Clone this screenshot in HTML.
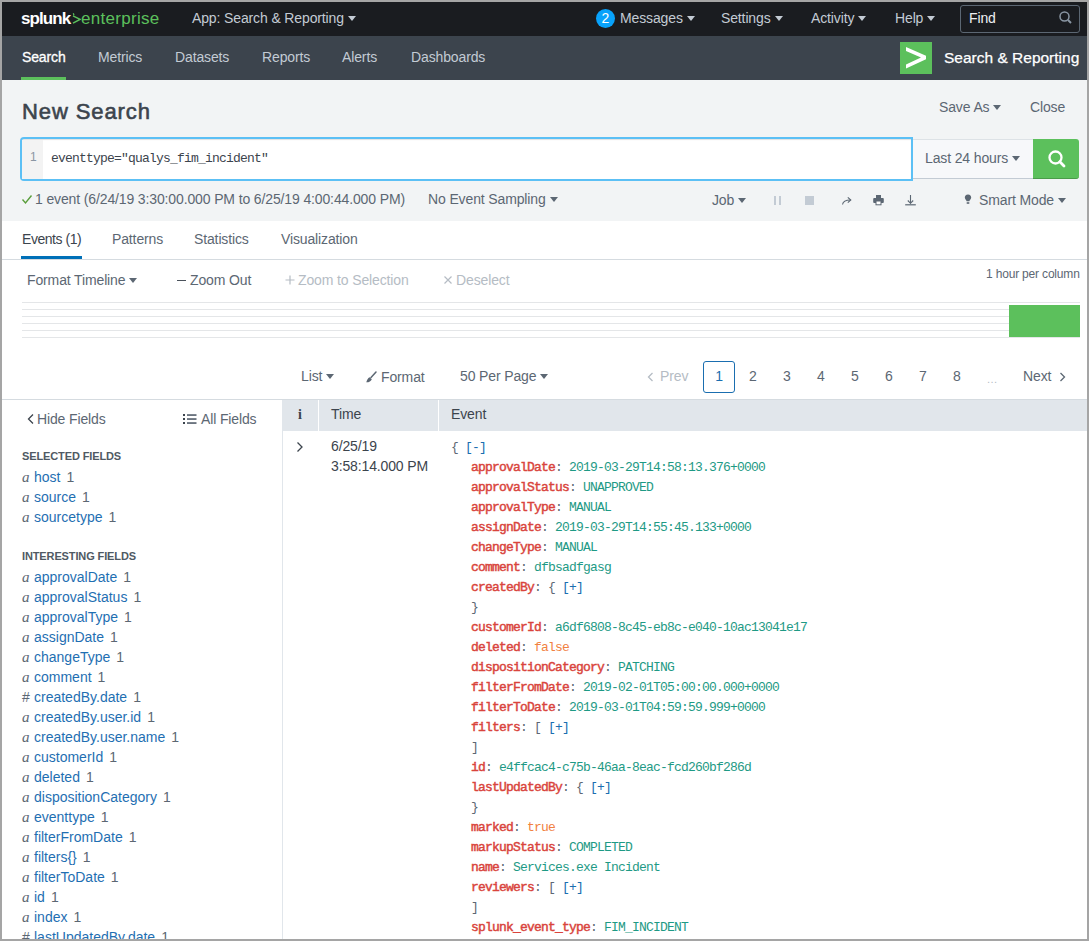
<!DOCTYPE html>
<html><head><meta charset="utf-8">
<style>
*{box-sizing:border-box;margin:0;padding:0}
html,body{width:1089px;height:941px;overflow:hidden;background:#fff;font-family:"Liberation Sans",sans-serif;position:relative}
.a{position:absolute;white-space:nowrap}
.bd{position:absolute;background:#a5a5a5;z-index:50}
#top{position:absolute;left:0;top:0;width:1089px;height:36px;background:#1a1c20}
#nav{position:absolute;left:0;top:36px;width:1089px;height:44px;background:#3c444d}
#hdr{position:absolute;left:0;top:80px;width:1089px;height:141px;background:#f2f4f5}
.tw{color:#c3cbd4;font-size:14px;line-height:16px;letter-spacing:-0.13px}
.car{display:inline-block;width:0;height:0;border-left:4px solid transparent;border-right:4px solid transparent;border-top:5px solid currentColor;vertical-align:middle;margin-left:4px;position:relative;top:-1px}
.nv{color:#c3cbd4;font-size:14px;line-height:16px;letter-spacing:-0.13px}
.t{color:#5c6773;font-size:14px;line-height:16px;letter-spacing:-0.13px}
.fl{font-size:14px;line-height:16px;color:#5c6773}
.fl i{font-family:"Liberation Serif",serif;font-style:italic;font-size:15px;color:#5c6773;display:inline-block;width:12px}
.fl b{font-weight:normal;color:#1f6fb2;margin-right:6px}
.mono{font-family:"Liberation Mono",monospace;font-size:13px;letter-spacing:-0.8px;line-height:20px;color:#3c444d;white-space:nowrap}
.k{color:#d9443c;font-weight:normal;-webkit-text-stroke:0.45px #d9443c}
.v{color:#1e9a85}
.o{color:#f1813f}
.br{color:#1a6eb0}
.t.d{color:#3c444d}
</style></head><body>
<div id="top"></div>
<div id="nav"></div>
<div id="hdr"></div>

<!-- logo -->
<div class="a" style="left:21px;top:9px;font-size:17px;line-height:20px;letter-spacing:-0.9px;color:#fff;font-weight:bold">splunk</div>
<svg class="a" style="left:71px;top:13px" width="10" height="12" viewBox="0 0 10 12"><polyline points="2,2.9 9,6.4 2,10.1" fill="none" stroke="#5cc05c" stroke-width="1.5"/><line x1="2.3" y1="0.3" x2="3" y2="2.3" stroke="#5cc05c" stroke-width="1.2"/></svg>
<div class="a" style="left:81px;top:9px;font-size:17px;line-height:20px;letter-spacing:0.3px;color:#5cc05c">enterprise</div>
<div class="a tw" style="left:192px;top:10px">App: Search &amp; Reporting<span class="car"></span></div>
<div class="a" style="left:596px;top:9px;width:19px;height:19px;border-radius:50%;background:#08a2fb;color:#fff;font-size:14px;line-height:19px;text-align:center">2</div>
<div class="a tw" style="left:620px;top:10px">Messages<span class="car"></span></div>
<div class="a tw" style="left:721px;top:10px">Settings<span class="car"></span></div>
<div class="a tw" style="left:811px;top:10px">Activity<span class="car"></span></div>
<div class="a tw" style="left:895px;top:10px">Help<span class="car"></span></div>
<div class="a" style="left:960px;top:5px;width:120px;height:28px;border:1px solid #5c6773;border-radius:3px"></div>
<div class="a tw" style="left:969px;top:10px;color:#eef0f2">Find</div>
<svg class="a" style="left:1058px;top:10px" width="16" height="16" viewBox="0 0 16 16"><circle cx="6.5" cy="6.5" r="4.5" fill="none" stroke="#8a96a3" stroke-width="1.5"/><line x1="10" y1="10" x2="13" y2="13" stroke="#8a96a3" stroke-width="2"/></svg>

<!-- nav -->
<div class="a nv" style="left:22px;top:49px;color:#fff;-webkit-text-stroke:0.3px #fff">Search</div>
<div class="a" style="left:21px;top:77px;width:45px;height:3px;background:#5cc05c"></div>
<div class="a nv" style="left:98px;top:49px">Metrics</div>
<div class="a nv" style="left:175px;top:49px">Datasets</div>
<div class="a nv" style="left:262px;top:49px">Reports</div>
<div class="a nv" style="left:342px;top:49px">Alerts</div>
<div class="a nv" style="left:411px;top:49px">Dashboards</div>
<div class="a" style="left:900px;top:42px;width:32px;height:32px;background:#5cc05c"></div>
<svg class="a" style="left:900px;top:42px" width="32" height="32" viewBox="0 0 32 32"><polygon points="6,5 26,13.8 26,17.2 6,26.5 6,22.5 21,15.5 6,9" fill="#fff"/></svg>
<div class="a" style="left:944px;top:48px;color:#fff;font-size:15.5px;line-height:20px;-webkit-text-stroke:0.25px #fff">Search &amp; Reporting</div>


<!-- header -->
<div class="a" style="left:22px;top:98px;color:#3c444d;font-size:22px;line-height:28px;font-weight:normal;-webkit-text-stroke:0.6px #3c444d;letter-spacing:0.9px">New Search</div>
<div class="a t" style="left:939px;top:99px">Save As<span class="car"></span></div>
<div class="a t" style="left:1030px;top:99px">Close</div>
<div class="a" style="left:20px;top:137px;width:893px;height:44px;border:2px solid #5cc0f5;border-radius:4px 0 0 4px;background:#fff;box-shadow:inset 0 1px 1px rgba(0,0,0,0.12)"></div>
<div class="a" style="left:22px;top:140px;width:21px;height:39px;background:#f3f3f3"></div>
<div class="a" style="left:30px;top:149px;color:#8a96a3;font-size:12px;line-height:16px">1</div>
<div class="a mono" style="left:51px;top:149px;color:#3c444d">eventtype="qualys_fim_incident"</div>
<div class="a" style="left:913px;top:139px;width:121px;height:40px;border-top:1px solid #dde2e6;border-bottom:1.5px solid #c3cbd4;background:#f7f8fa"></div>
<div class="a t" style="left:925px;top:150px">Last 24 hours<span class="car"></span></div>
<div class="a" style="left:1033px;top:139px;width:46px;height:40px;background:#5cc05c;border-radius:0 3px 3px 0;border-bottom:1.5px solid #4a9c4a"></div>
<svg class="a" style="left:1045px;top:148px" width="22" height="22" viewBox="0 0 22 22"><circle cx="10.5" cy="9.5" r="6" fill="none" stroke="#fff" stroke-width="2.3"/><line x1="14.8" y1="13.8" x2="19" y2="18" stroke="#fff" stroke-width="2.8" stroke-linecap="round"/></svg>

<svg class="a" style="left:21px;top:193px" width="12" height="12" viewBox="0 0 12 12"><polyline points="1.5,6.5 4.5,10 10.5,2.5" fill="none" stroke="#5a9e3c" stroke-width="1.4"/></svg>
<div class="a t" style="left:35px;top:191px">1 event (6/24/19 3:30:00.000 PM to 6/25/19 4:00:44.000 PM)</div>
<div class="a t" style="left:428px;top:191px">No Event Sampling<span class="car"></span></div>
<div class="a t" style="left:712px;top:192px">Job<span class="car"></span></div>
<div class="a" style="left:774px;top:196px;width:2px;height:9px;background:#c3cbd4"></div>
<div class="a" style="left:779px;top:196px;width:2px;height:9px;background:#c3cbd4"></div>
<div class="a" style="left:805px;top:196px;width:9px;height:9px;background:#c3cbd4"></div>
<svg class="a" style="left:840px;top:194px" width="14" height="12" viewBox="0 0 14 12"><path d="M2.5 10.5 C3 7.5 5 6 10.5 6" fill="none" stroke="#5c6773" stroke-width="1.1"/><polyline points="7.8,3.3 10.8,6 7.8,8.7" fill="none" stroke="#5c6773" stroke-width="1.1"/></svg>
<svg class="a" style="left:872px;top:194px" width="13" height="12" viewBox="0 0 13 12"><rect x="4" y="1" width="5" height="3.5" fill="#5c6773"/><rect x="1.2" y="4" width="10.6" height="5" rx="1" fill="#5c6773"/><rect x="4" y="7" width="5" height="3.8" fill="#fff" stroke="#5c6773" stroke-width="1"/></svg>
<svg class="a" style="left:904px;top:194px" width="13" height="12" viewBox="0 0 13 12"><line x1="6.5" y1="1" x2="6.5" y2="9.5" stroke="#5c6773" stroke-width="1.1"/><polyline points="3.8,6.5 6.5,9.3 9.2,6.5" fill="none" stroke="#5c6773" stroke-width="1.1"/><line x1="1.2" y1="10.8" x2="11.8" y2="10.8" stroke="#5c6773" stroke-width="1.2"/></svg>
<svg class="a" style="left:964px;top:194px" width="8" height="11" viewBox="0 0 8 11"><path d="M4 0.5 C1.8 0.5 0.8 2 0.8 3.6 C0.8 5.2 2.3 6 2.6 7.3 L5.4 7.3 C5.7 6 7.2 5.2 7.2 3.6 C7.2 2 6.2 0.5 4 0.5Z" fill="#5c6773"/><rect x="2.7" y="8.2" width="2.6" height="1.6" fill="#5c6773"/></svg>
<div class="a t" style="left:979px;top:192px">Smart Mode<span class="car"></span></div>


<!-- tabs -->
<div class="a t d" style="left:22px;top:231px;letter-spacing:-0.45px">Events (1)</div>
<div class="a" style="left:21px;top:256px;width:61px;height:3px;background:#0070b8"></div>
<div class="a t" style="left:112px;top:231px">Patterns</div>
<div class="a t" style="left:194px;top:231px">Statistics</div>
<div class="a t" style="left:281px;top:231px">Visualization</div>
<div class="a" style="left:2px;top:259px;width:1085px;height:1px;background:#d5dbe0"></div>

<!-- timeline -->
<div class="a t" style="left:27px;top:272px">Format Timeline<span class="car"></span></div>
<div class="a" style="left:177px;top:280px;width:9px;height:1.4px;background:#4a525b"></div><div class="a t" style="left:190px;top:272px">Zoom Out</div>
<svg class="a" style="left:285px;top:275px" width="10" height="10" viewBox="0 0 10 10"><path d="M5 0.5V9.5M0.5 5H9.5" stroke="#b5bcc4" stroke-width="1.2"/></svg><div class="a t" style="left:298px;top:272px;color:#b5bcc4">Zoom to Selection</div>
<svg class="a" style="left:444px;top:276px" width="8" height="8" viewBox="0 0 8 8"><path d="M0.5 0.5L7.5 7.5M7.5 0.5L0.5 7.5" stroke="#b5bcc4" stroke-width="1.2"/></svg><div class="a t" style="left:456px;top:272px;color:#b5bcc4">Deselect</div>
<div class="a" style="left:986px;top:267px;color:#5c6773;font-size:12px;line-height:14px;letter-spacing:-0.18px">1 hour per column</div>
<div class="a" style="left:22px;top:302px;width:1058px;height:1px;background:#e4e6e8"></div>
<div class="a" style="left:22px;top:309px;width:1058px;height:1px;background:#e4e6e8"></div>
<div class="a" style="left:22px;top:316px;width:1058px;height:1px;background:#e4e6e8"></div>
<div class="a" style="left:22px;top:323px;width:1058px;height:1px;background:#e4e6e8"></div>
<div class="a" style="left:22px;top:330px;width:1058px;height:1px;background:#e4e6e8"></div>
<div class="a" style="left:22px;top:337px;width:1058px;height:1px;background:#e4e6e8"></div>
<div class="a" style="left:1009px;top:305px;width:71px;height:32px;background:#5cc05c"></div>

<!-- pagination -->
<div class="a t" style="left:301px;top:368px">List<span class="car"></span></div>
<svg class="a" style="left:365px;top:371px" width="12" height="12" viewBox="0 0 12 12"><line x1="11" y1="1" x2="6" y2="6.5" stroke="#5c6773" stroke-width="1.5" stroke-linecap="round"/><path d="M4.6 6.2 L6.8 8.2 C6 10.3 4 11.4 1.2 11.3 C1.6 10.3 1.8 9.6 2.4 8.4 C3 7.3 3.8 6.6 4.6 6.2Z" fill="#5c6773"/></svg>
<div class="a t" style="left:381px;top:369px">Format</div>
<div class="a t" style="left:460px;top:368px">50 Per Page<span class="car"></span></div>
<svg class="a" style="left:647px;top:372px" width="7" height="10" viewBox="0 0 7 10"><polyline points="5.5,1 1.5,5 5.5,9" fill="none" stroke="#b5bcc4" stroke-width="1.3"/></svg><div class="a t" style="left:660px;top:368px;color:#b5bcc4">Prev</div>
<div class="a" style="left:703px;top:361px;width:32px;height:32px;border:1px solid #1a6eb0;border-radius:3px"></div>
<div class="a t" style="left:703px;top:368px;width:32px;text-align:center;color:#1a6eb0">1</div>
<div class="a t" style="left:749px;top:368px">2</div>
<div class="a t" style="left:783px;top:368px">3</div>
<div class="a t" style="left:817px;top:368px">4</div>
<div class="a t" style="left:851px;top:368px">5</div>
<div class="a t" style="left:885px;top:368px">6</div>
<div class="a t" style="left:919px;top:368px">7</div>
<div class="a t" style="left:953px;top:368px">8</div>
<div class="a t" style="left:987px;top:368px;color:#b5bcc4;font-size:11px;letter-spacing:0.5px;top:371px">...</div>
<div class="a t" style="left:1023px;top:368px">Next</div><svg class="a" style="left:1059px;top:372px" width="7" height="10" viewBox="0 0 7 10"><polyline points="1.5,1 5.5,5 1.5,9" fill="none" stroke="#5c6773" stroke-width="1.3"/></svg>
<div class="a" style="left:2px;top:399px;width:1085px;height:1px;background:#d5dbe0"></div>


<!-- sidebar -->
<div class="a" style="left:282px;top:400px;width:1px;height:539px;background:#e1e6eb"></div>
<svg class="a" style="left:27px;top:413px" width="8" height="12" viewBox="0 0 8 12"><polyline points="6,1.5 1.5,6 6,10.5" fill="none" stroke="#3c444d" stroke-width="1.3"/></svg>
<div class="a t" style="left:37px;top:411px">Hide Fields</div>
<svg class="a" style="left:183px;top:413px" width="14" height="12" viewBox="0 0 14 12"><rect x="0" y="1" width="2" height="2" fill="#3c444d"/><rect x="0" y="5" width="2" height="2" fill="#3c444d"/><rect x="0" y="9" width="2" height="2" fill="#3c444d"/><rect x="4" y="1.2" width="9.5" height="1.7" fill="#5c6773"/><rect x="4" y="5.2" width="9.5" height="1.7" fill="#5c6773"/><rect x="4" y="9.2" width="9.5" height="1.7" fill="#5c6773"/></svg>
<div class="a t" style="left:201px;top:411px">All Fields</div>
<div class="a" style="left:22px;top:449px;color:#4f5963;font-size:11px;line-height:14px;font-weight:bold;letter-spacing:-0.12px">SELECTED FIELDS</div>
<div class="a fl" style="left:22px;top:469px"><i>a</i><b>host</b>1</div>
<div class="a fl" style="left:22px;top:489px"><i>a</i><b>source</b>1</div>
<div class="a fl" style="left:22px;top:509px"><i>a</i><b>sourcetype</b>1</div>
<div class="a" style="left:22px;top:549px;color:#4f5963;font-size:11px;line-height:14px;font-weight:bold;letter-spacing:-0.12px">INTERESTING FIELDS</div>
<div class="a fl" style="left:22px;top:569px"><i>a</i><b>approvalDate</b>1</div>
<div class="a fl" style="left:22px;top:589px"><i>a</i><b>approvalStatus</b>1</div>
<div class="a fl" style="left:22px;top:609px"><i>a</i><b>approvalType</b>1</div>
<div class="a fl" style="left:22px;top:629px"><i>a</i><b>assignDate</b>1</div>
<div class="a fl" style="left:22px;top:649px"><i>a</i><b>changeType</b>1</div>
<div class="a fl" style="left:22px;top:669px"><i>a</i><b>comment</b>1</div>
<div class="a fl" style="left:22px;top:689px"><i style="font-family:'Liberation Sans';font-style:normal;font-size:14px">#</i><b>createdBy.date</b>1</div>
<div class="a fl" style="left:22px;top:709px"><i>a</i><b>createdBy.user.id</b>1</div>
<div class="a fl" style="left:22px;top:729px"><i>a</i><b>createdBy.user.name</b>1</div>
<div class="a fl" style="left:22px;top:749px"><i>a</i><b>customerId</b>1</div>
<div class="a fl" style="left:22px;top:769px"><i>a</i><b>deleted</b>1</div>
<div class="a fl" style="left:22px;top:789px"><i>a</i><b>dispositionCategory</b>1</div>
<div class="a fl" style="left:22px;top:809px"><i>a</i><b>eventtype</b>1</div>
<div class="a fl" style="left:22px;top:829px"><i>a</i><b>filterFromDate</b>1</div>
<div class="a fl" style="left:22px;top:849px"><i>a</i><b>filters{}</b>1</div>
<div class="a fl" style="left:22px;top:869px"><i>a</i><b>filterToDate</b>1</div>
<div class="a fl" style="left:22px;top:889px"><i>a</i><b>id</b>1</div>
<div class="a fl" style="left:22px;top:909px"><i>a</i><b>index</b>1</div>
<div class="a fl" style="left:22px;top:929px"><i style="font-family:'Liberation Sans';font-style:normal;font-size:14px">#</i><b>lastUpdatedBy.date</b>1</div>

<!-- table header -->
<div class="a" style="left:283px;top:400px;width:804px;height:31px;background:#e1e6eb"></div>
<div class="a" style="left:318px;top:400px;width:1px;height:31px;background:#fff"></div>
<div class="a" style="left:438px;top:400px;width:1px;height:31px;background:#fff"></div>
<div class="a" style="left:298px;top:407px;font-family:'Liberation Serif',serif;font-weight:bold;font-size:14px;line-height:16px;color:#3c444d">i</div>
<div class="a t d" style="left:331px;top:406px">Time</div>
<div class="a t d" style="left:451px;top:406px">Event</div>
<svg class="a" style="left:295px;top:441px" width="10" height="12" viewBox="0 0 10 12"><polyline points="2.5,1.5 7,6 2.5,10.5" fill="none" stroke="#3c444d" stroke-width="1.3"/></svg>
<div class="a t d" style="left:331px;top:436px;line-height:20px">6/25/19<br>3:58:14.000 PM</div>
<div class="a mono" style="left:451px;top:438px;color:#5c6773">
<div>{ <span class="br">[-]</span></div>
<div style="padding-left:20px"><span class="k">approvalDate</span>: <span class="v">2019-03-29T14:58:13.376+0000</span></div>
<div style="padding-left:20px"><span class="k">approvalStatus</span>: <span class="v">UNAPPROVED</span></div>
<div style="padding-left:20px"><span class="k">approvalType</span>: <span class="v">MANUAL</span></div>
<div style="padding-left:20px"><span class="k">assignDate</span>: <span class="v">2019-03-29T14:55:45.133+0000</span></div>
<div style="padding-left:20px"><span class="k">changeType</span>: <span class="v">MANUAL</span></div>
<div style="padding-left:20px"><span class="k">comment</span>: <span class="v">dfbsadfgasg</span></div>
<div style="padding-left:20px"><span class="k">createdBy</span>: { <span class="br">[+]</span></div>
<div style="padding-left:20px">}</div>
<div style="padding-left:20px"><span class="k">customerId</span>: <span class="v">a6df6808-8c45-eb8c-e040-10ac13041e17</span></div>
<div style="padding-left:20px"><span class="k">deleted</span>: <span class="o">false</span></div>
<div style="padding-left:20px"><span class="k">dispositionCategory</span>: <span class="v">PATCHING</span></div>
<div style="padding-left:20px"><span class="k">filterFromDate</span>: <span class="v">2019-02-01T05:00:00.000+0000</span></div>
<div style="padding-left:20px"><span class="k">filterToDate</span>: <span class="v">2019-03-01T04:59:59.999+0000</span></div>
<div style="padding-left:20px"><span class="k">filters</span>: [ <span class="br">[+]</span></div>
<div style="padding-left:20px">]</div>
<div style="padding-left:20px"><span class="k">id</span>: <span class="v">e4ffcac4-c75b-46aa-8eac-fcd260bf286d</span></div>
<div style="padding-left:20px"><span class="k">lastUpdatedBy</span>: { <span class="br">[+]</span></div>
<div style="padding-left:20px">}</div>
<div style="padding-left:20px"><span class="k">marked</span>: <span class="o">true</span></div>
<div style="padding-left:20px"><span class="k">markupStatus</span>: <span class="v">COMPLETED</span></div>
<div style="padding-left:20px"><span class="k">name</span>: <span class="v">Services.exe Incident</span></div>
<div style="padding-left:20px"><span class="k">reviewers</span>: [ <span class="br">[+]</span></div>
<div style="padding-left:20px">]</div>
<div style="padding-left:20px"><span class="k">splunk_event_type</span>: <span class="v">FIM_INCIDENT</span></div>
</div>

<div class="bd" style="left:0;top:0;width:1089px;height:2px"></div>
<div class="bd" style="left:0;top:939px;width:1089px;height:2px"></div>
<div class="bd" style="left:0;top:0;width:2px;height:941px"></div>
<div class="bd" style="left:1087px;top:0;width:2px;height:941px"></div>
</body></html>
